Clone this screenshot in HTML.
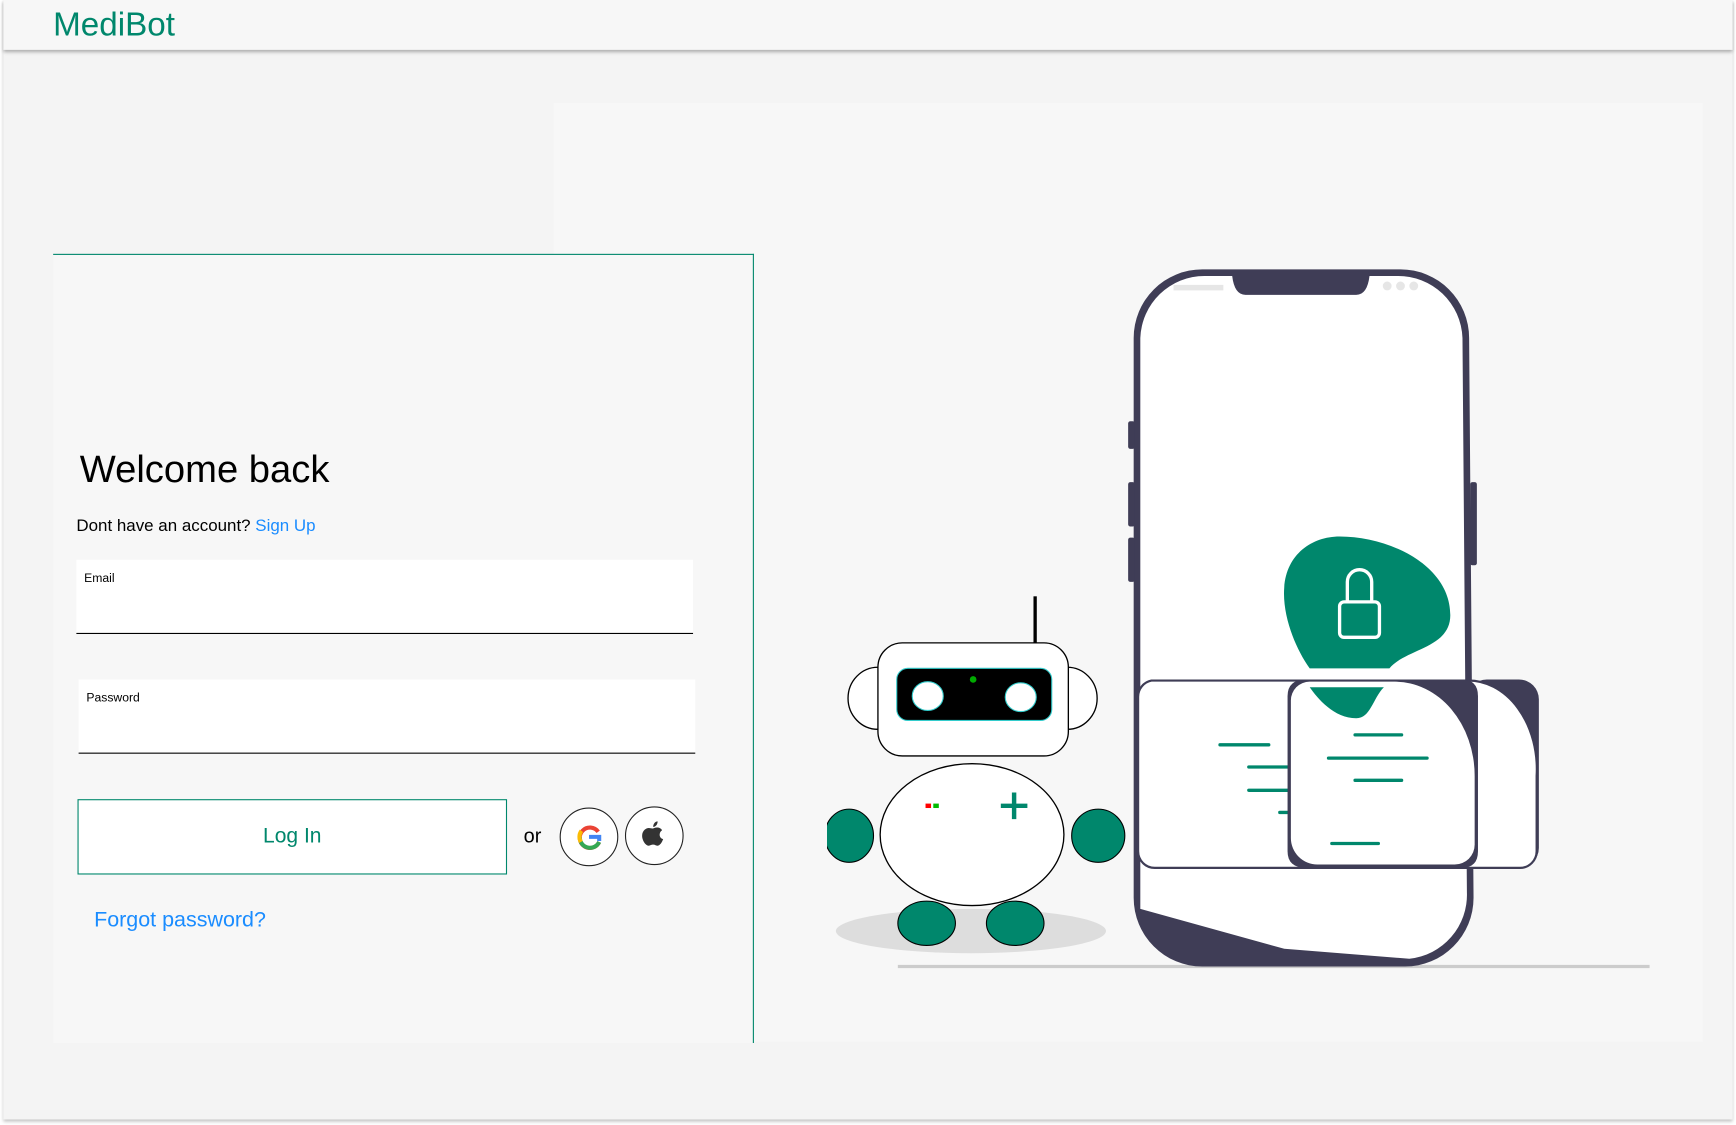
<!DOCTYPE html>
<html><head><meta charset="utf-8"><style>
html,body{margin:0;padding:0;width:1736px;height:1125px;overflow:hidden;background:#fff;font-family:"Liberation Sans",sans-serif}
#w{position:absolute;left:0;top:0;width:1568px;height:1015px;transform:scale(1.1071,1.1084);transform-origin:0 0}
.frame{position:absolute;left:3px;top:0;width:1562px;height:1010px;background:#f4f4f4;box-shadow:0 2px 3px rgba(0,0,0,.25)}
.hdr{position:absolute;left:3px;top:0;width:1562px;height:45px;background:#f7f7f7;box-shadow:0 2px 3px rgba(0,0,0,.3)}
.logo{position:absolute;left:48px;top:6px;font-size:30px;color:#00876c}
.panel{position:absolute;left:500px;top:93px;width:1038px;height:847px;background:#f7f7f7}
.card{position:absolute;left:48px;top:229px;width:632px;height:711px;background:#f7f7f7;border-top:1px solid #00876c;border-right:1px solid #00876c}
.abs{position:absolute}
.field{position:absolute;background:#fff;border-bottom:1.5px solid #000}
.field span{position:absolute;left:7px;top:11px;font-size:11px}
</style></head><body><div id="w">
<div class="frame"></div>
<div class="panel"></div>
<div class="hdr"></div>
<div class="logo">MediBot</div>
<div class="card"></div>
<div class="abs" style="left:72px;top:405px;font-size:34.5px">Welcome back</div>
<div class="abs" style="left:69px;top:466px;font-size:15.3px">Dont have an account? <span style="color:#1a8cff">Sign Up</span></div>
<div class="field" style="left:69px;top:505px;width:557px;height:66px"><span>Email</span></div>
<div class="field" style="left:71px;top:613px;width:557px;height:66px"><span>Password</span></div>
<div class="abs" style="left:70px;top:721px;width:386px;height:66px;border:1px solid #00876c;background:#fff;color:#00876c;font-size:19px;text-align:center;line-height:66px">Log In</div>
<div class="abs" style="left:473px;top:744px;font-size:18px">or</div>
<svg class="abs" style="left:500px;top:725px" width="125" height="60" viewBox="0 0 125 60">
<ellipse cx="32" cy="30" rx="26" ry="26" fill="#fff" stroke="#222"/>
<ellipse cx="91" cy="29" rx="26" ry="26" fill="#fff" stroke="#222"/>
<g transform="translate(21,19) scale(0.92)" fill="none" stroke-width="4">
<path d="M21 7 A10 10 0 1 0 22 17" stroke="#ea4335"/>
<path d="M3 12 A10 10 0 0 0 22 17" stroke="#34a853"/>
<path d="M4.5 6 A10 10 0 0 0 4 17" stroke="#fbbc05"/>
<path d="M12 12 H22 V16" stroke="#4285f4"/>
</g>
<path d="M91 22c3-1 6 0 7 2-3 2-3 7 1 8-1 3-3 6-5 6-2 0-2-1-4-1s-3 1-4 1c-3 0-6-5-6-9 0-5 4-7 6-7 2 0 3 1 5 0zM90 21c0-3 2-5 4-5 0 3-2 5-4 5z" fill="#333"/>
</svg>
<div class="abs" style="left:85px;top:819px;font-size:19.4px;color:#1a8cff">Forgot password?</div>
<svg class="abs" style="left:0;top:0" width="1568" height="1015" viewBox="0 0 1568 1015">
<line x1="811" y1="872" x2="1490" y2="872" stroke="#ccc" stroke-width="3"/>
<path d="M1086 243 H1265 A62 62 0 0 1 1327 305 L1331 810 A62 62 0 0 1 1269 872 H1086 A62 62 0 0 1 1024 810 V305 A62 62 0 0 1 1086 243Z" fill="#3f3d56"/>
<path d="M1088 249 H1113 Q1115 266 1125 266 H1225 Q1235 266 1237 249 H1262 A58 58 0 0 1 1321 305 L1325 805 A58 58 0 0 1 1273 865 L1160 856 L1030 820 V305 A58 58 0 0 1 1088 249Z" fill="#fff"/>
<rect x="1060" y="257" width="45" height="5" fill="#e6e6e6"/>
<circle cx="1253" cy="258" r="4" fill="#e6e6e6"/><circle cx="1265" cy="258" r="4" fill="#e6e6e6"/><circle cx="1277" cy="258" r="4" fill="#e6e6e6"/>
<rect x="1019" y="380" width="6" height="25" rx="2" fill="#3f3d56"/>
<rect x="1019" y="435" width="6" height="40" rx="2" fill="#3f3d56"/>
<rect x="1019" y="485" width="6" height="40" rx="2" fill="#3f3d56"/>
<rect x="1328" y="435" width="6" height="75" rx="2" fill="#3f3d56"/>
<path d="M1210 484 C1255 484 1310 510 1310 555 C1310 585 1270 585 1255 603 H1183 C1170 585 1158 555 1160 530 C1162 500 1185 484 1210 484Z" fill="#00876c"/>
<rect x="1210" y="543" width="36" height="32" rx="4" fill="none" stroke="#fff" stroke-width="3"/>
<path d="M1217 543 V525 A11 11 0 0 1 1239 525 V543" fill="none" stroke="#fff" stroke-width="3"/>
<rect x="1325" y="613" width="65" height="170" rx="18" fill="#3f3d56"/>
<path d="M1040 614 H1325 A62 80 0 0 1 1388 700 V768 A15 15 0 0 1 1373 783 H1043 A15 15 0 0 1 1028 768 V629 A15 15 0 0 1 1040 614Z" fill="#fff" stroke="#3f3d56" stroke-width="2"/>
<path d="M1102 672 H1146 M1128 692 H1165 M1128 713 H1165 M1156 733 H1165" stroke="#00876c" stroke-width="3" stroke-linecap="round"/>
<path d="M1180 613 H1320 Q1335 613 1335 628 V768 Q1335 783 1320 783 H1180 Q1163 783 1163 768 V628 Q1163 613 1180 613Z" fill="#3f3d56"/>
<path d="M1183 615 H1260 A72 85 0 0 1 1332 700 V762 A18 18 0 0 1 1314 780 H1190 A24 24 0 0 1 1166 756 V632 A17 17 0 0 1 1183 615Z" fill="#fff"/>
<path d="M1183 620 H1250 C1240 630 1238 648 1225 648 C1205 648 1190 630 1183 620Z" fill="#00876c"/>
<path d="M1224 663 H1266 M1200 684 H1289 M1224 704 H1266 M1203 761 H1245" stroke="#00876c" stroke-width="3" stroke-linecap="round"/>
<ellipse cx="877" cy="840" rx="122" ry="20" fill="#ddd"/>
<line x1="935" y1="538" x2="935" y2="580" stroke="#000" stroke-width="3"/>
<ellipse cx="793" cy="630" rx="27" ry="28" fill="#fff" stroke="#000" stroke-width="1.2"/>
<ellipse cx="964" cy="630" rx="27" ry="28" fill="#fff" stroke="#000" stroke-width="1.2"/>
<rect x="793" y="580" width="172" height="102" rx="22" fill="#fff" stroke="#000" stroke-width="1.2"/>
<rect x="810" y="603" width="140" height="47" rx="10" fill="#000" stroke="#3cc" stroke-width="1"/>
<ellipse cx="838" cy="628" rx="14" ry="13" fill="#fff" stroke="#3cc"/>
<ellipse cx="922" cy="629" rx="14" ry="13" fill="#fff" stroke="#3cc"/>
<circle cx="879" cy="613" r="3" fill="#0a0"/>
<ellipse cx="767" cy="754" rx="22" ry="24" fill="#00876c" stroke="#000"/>
<rect x="740" y="725" width="7" height="60" fill="#f7f7f7"/>
<ellipse cx="992" cy="754" rx="24" ry="24" fill="#00876c" stroke="#000"/>
<ellipse cx="878" cy="753" rx="83" ry="64" fill="#fff" stroke="#000" stroke-width="1.2"/>
<ellipse cx="837" cy="833" rx="26" ry="20" fill="#00876c" stroke="#000"/>
<ellipse cx="917" cy="833" rx="26" ry="20" fill="#00876c" stroke="#000"/>
<path d="M916 715 V739 M904 727 H928" stroke="#00876c" stroke-width="4"/>
<rect x="836" y="725" width="5" height="4" fill="red"/><rect x="843" y="725" width="5" height="4" fill="#0b0"/>
</svg>
</div></body></html>
